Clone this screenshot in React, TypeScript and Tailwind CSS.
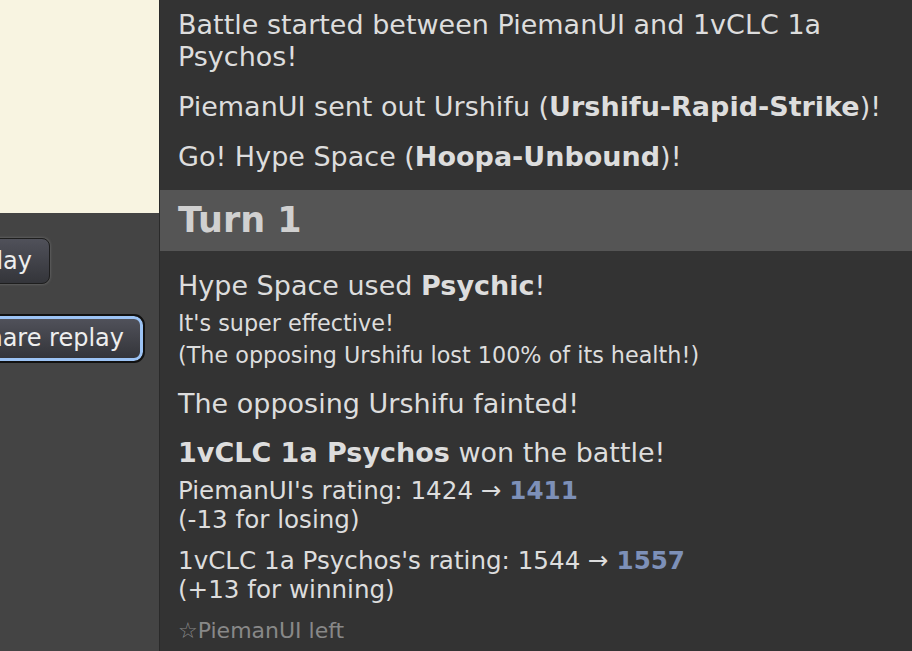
import React from "react";

const font = { fontFamily: '"DejaVu Sans", Verdana, sans-serif' };

const Msg = ({ children, className = "" }: { children: React.ReactNode; className?: string }) => (
  <div className={`text-[27px] leading-[32px] ${className}`}>{children}</div>
);

export default function App() {
  return (
    <div
      className="flex h-[651px] w-[912px] overflow-hidden bg-[#333] text-[#ddd]"
      style={font}
    >
      {/* left side: battle canvas + replay buttons */}
      <div className="flex w-[159px] shrink-0 flex-col overflow-hidden bg-[#444]">
        <div className="h-[213px] bg-[#f8f4e1]" />
        <div className="flex justify-end pr-[109px] pt-[25px]">
          <button className="shrink-0 whitespace-nowrap rounded-[8px] border border-[#1e1e1e] bg-gradient-to-b from-[#50515a] to-[#34353a] pl-[18px] pr-[17px] text-[24px] leading-[44px] text-[#eee] shadow-[0_0_3px_#777]">
            Play
          </button>
        </div>
        <div className="flex justify-end pr-[16px] pt-[32px]">
          <button className="shrink-0 whitespace-nowrap rounded-[9px] border-[3px] border-[#9cc3f4] bg-gradient-to-b from-[#50515a] to-[#34353a] pl-[16px] pr-[16px] text-[24px] leading-[39px] text-[#eee] outline outline-2 outline-[#111]">
            Share replay
          </button>
        </div>
      </div>

      {/* battle log */}
      <div className="flex-1 border-l border-[#2a2a2a] pt-[9px]">
        <div className="flex flex-col gap-[18px] px-[18px]">
          <Msg>
            Battle started between PiemanUI and 1vCLC 1a
            <br />
            Psychos!
          </Msg>
          <Msg>
            PiemanUI sent out Urshifu (<strong>Urshifu-Rapid-Strike</strong>)!
          </Msg>
          <Msg>
            Go! Hype Space (<strong>Hoopa-Unbound</strong>)!
          </Msg>
        </div>

        <div className="mt-[17px] flex h-[61px] items-center bg-[#555] px-[18px]">
          <h2 className="text-[35px] font-bold leading-none text-[#d0d0d0]">Turn 1</h2>
        </div>

        <div className="flex flex-col px-[18px] pt-[19px]">
          <Msg>
            Hype Space used <strong>Psychic</strong>!
          </Msg>
          <div className="mt-[5px] text-[22.3px] leading-[32px]">
            It's super effective!
            <br />
            (The opposing Urshifu lost 100% of its health!)
          </div>
          <Msg className="mt-[17px]">The opposing Urshifu fainted!</Msg>
          <Msg className="mt-[17px]">
            <strong>1vCLC 1a Psychos</strong> won the battle!
          </Msg>
          <div className="mt-[7px] text-[24.6px] leading-[29px]">
            PiemanUI's rating: 1424 &rarr; <strong className="text-[#7d90b8]">1411</strong>
            <br />
            (-13 for losing)
          </div>
          <div className="mt-[12px] text-[24.6px] leading-[29px]">
            1vCLC 1a Psychos's rating: 1544 &rarr;{" "}
            <strong className="text-[#7d90b8]">1557</strong>
            <br />
            (+13 for winning)
          </div>
          <div className="mt-[12px] text-[22px] leading-[29px] text-[#888]">☆PiemanUI left</div>
        </div>
      </div>
    </div>
  );
}
